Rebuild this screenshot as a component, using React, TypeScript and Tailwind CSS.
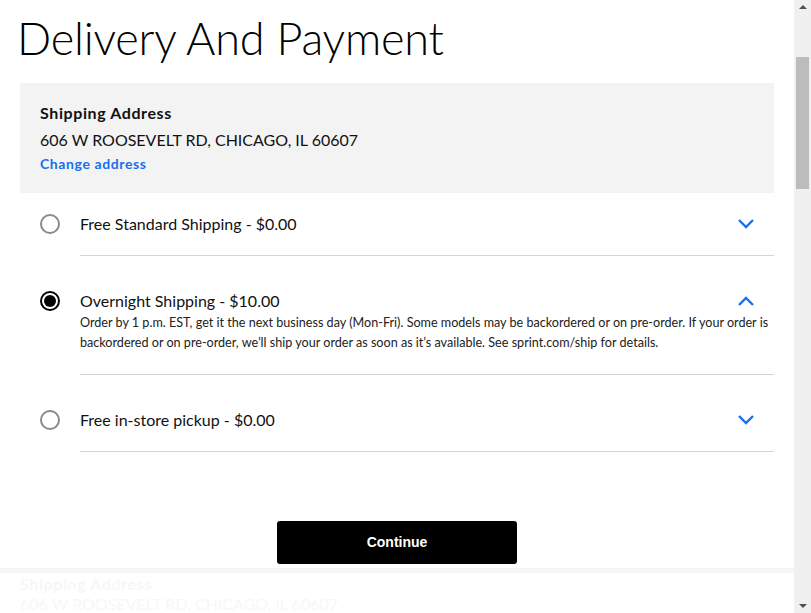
import React, { useState } from "react";

type Option = {
  id: string;
  label: string;
  details?: string;
};

const OPTIONS: Option[] = [
  { id: "standard", label: "Free Standard Shipping - $0.00" },
  {
    id: "overnight",
    label: "Overnight Shipping - $10.00",
    details:
      "Order by 1 p.m. EST, get it the next business day (Mon-Fri). Some models may be backordered or on pre-order. If your order is backordered or on pre-order, we\u2019ll ship your order as soon as it\u2019s available. See sprint.com/ship for details.",
  },
  { id: "pickup", label: "Free in-store pickup - $0.00" },
];

function Chevron({ up }: { up?: boolean }) {
  return (
    <svg width="18" height="12" viewBox="0 0 18 12" className="block shrink-0">
      <path
        d={up ? "M2 10 L9 3 L16 10" : "M2 2 L9 9 L16 2"}
        fill="none"
        stroke="#1a6ef0"
        strokeWidth="2.4"
      />
    </svg>
  );
}

function Radio({ checked }: { checked: boolean }) {
  if (checked) {
    return (
      <span className="flex h-5 w-5 shrink-0 items-center justify-center rounded-full border-2 border-black">
        <span className="block h-3 w-3 rounded-full bg-black" />
      </span>
    );
  }
  return <span className="block h-5 w-5 shrink-0 rounded-full border-2 border-[#8a8a8a]" />;
}

export default function App() {
  const [selected, setSelected] = useState("overnight");

  return (
    <div className="flex h-[613px] w-[811px] overflow-hidden bg-white font-['Lato',sans-serif] text-[#111]">
      <div className="min-w-0 flex-1">
        {/* Title */}
        <h1 className="ml-[17px] pt-[8px] text-[45px] font-light leading-[60px] tracking-[-0.2px] text-black">
          Delivery And Payment
        </h1>

        {/* Shipping address */}
        <div className="mx-5 mt-[15px] h-[110px] bg-[#f3f3f3] px-5 pt-[20px]">
          <p className="text-[16px] font-bold leading-5 tracking-[0.6px]">Shipping Address</p>
          <p className="mt-[7px] text-[16px] leading-5">606 W ROOSEVELT RD, CHICAGO, IL 60607</p>
          <a className="mt-[4px] block text-[14px] font-bold leading-5 tracking-[0.6px] text-[#1a6ef0]" href="#">
            Change address
          </a>
        </div>

        {/* Shipping options */}
        <div className="mx-5">
          {OPTIONS.map((opt, i) => {
            const open = opt.id === selected;
            const top = i === 0 ? "pt-[21px]" : "pt-[35px]";
            return (
              <div key={opt.id} className="flex cursor-pointer pl-5" onClick={() => setSelected(opt.id)}>
                <div className={top}>
                  <Radio checked={open} />
                </div>
                <div className={`ml-5 flex-1 border-b border-[#d4d4d4] pb-[21px] ${top}`}>
                  <div className="flex h-5 items-center justify-between pr-[19px]">
                    <span className="text-[16px] leading-5">{opt.label}</span>
                    <Chevron up={open} />
                  </div>
                  {open && opt.details && (
                    <p className="mt-[2px] text-[12.6px] leading-[20px] text-[#222]">{opt.details}</p>
                  )}
                </div>
              </div>
            );
          })}
        </div>

        {/* Continue */}
        <div className="mt-[69px] flex justify-center">
          <button className="h-[43px] w-[240px] rounded-[3px] bg-black font-['Liberation_Sans',sans-serif] text-[14px] font-bold text-white">
            Continue
          </button>
        </div>

        {/* Faded next section */}
        <div className="mt-[4px] h-[5px] bg-[#f5f5f5]" />
        <div className="px-5 pt-[1px] text-[#f7f7f7]">
          <p className="text-[16px] font-bold leading-5 tracking-[0.6px]">Shipping Address</p>
          <p className="text-[16px] leading-5">606 W ROOSEVELT RD, CHICAGO, IL 60607</p>
        </div>
      </div>

      {/* Scrollbar */}
      <div className="flex w-[17px] shrink-0 flex-col items-center bg-[#f0f0f0]">
        <div className="mt-[5px] h-0 w-0 border-x-[4px] border-b-[4px] border-x-transparent border-b-[#505050]" />
        <div className="mt-[48px] h-[132px] w-[13px] bg-[#bcbcbc]" />
        <div className="flex-1" />
        <div className="mb-[5px] h-0 w-0 border-x-[4px] border-t-[4px] border-x-transparent border-t-[#505050]" />
      </div>
    </div>
  );
}
